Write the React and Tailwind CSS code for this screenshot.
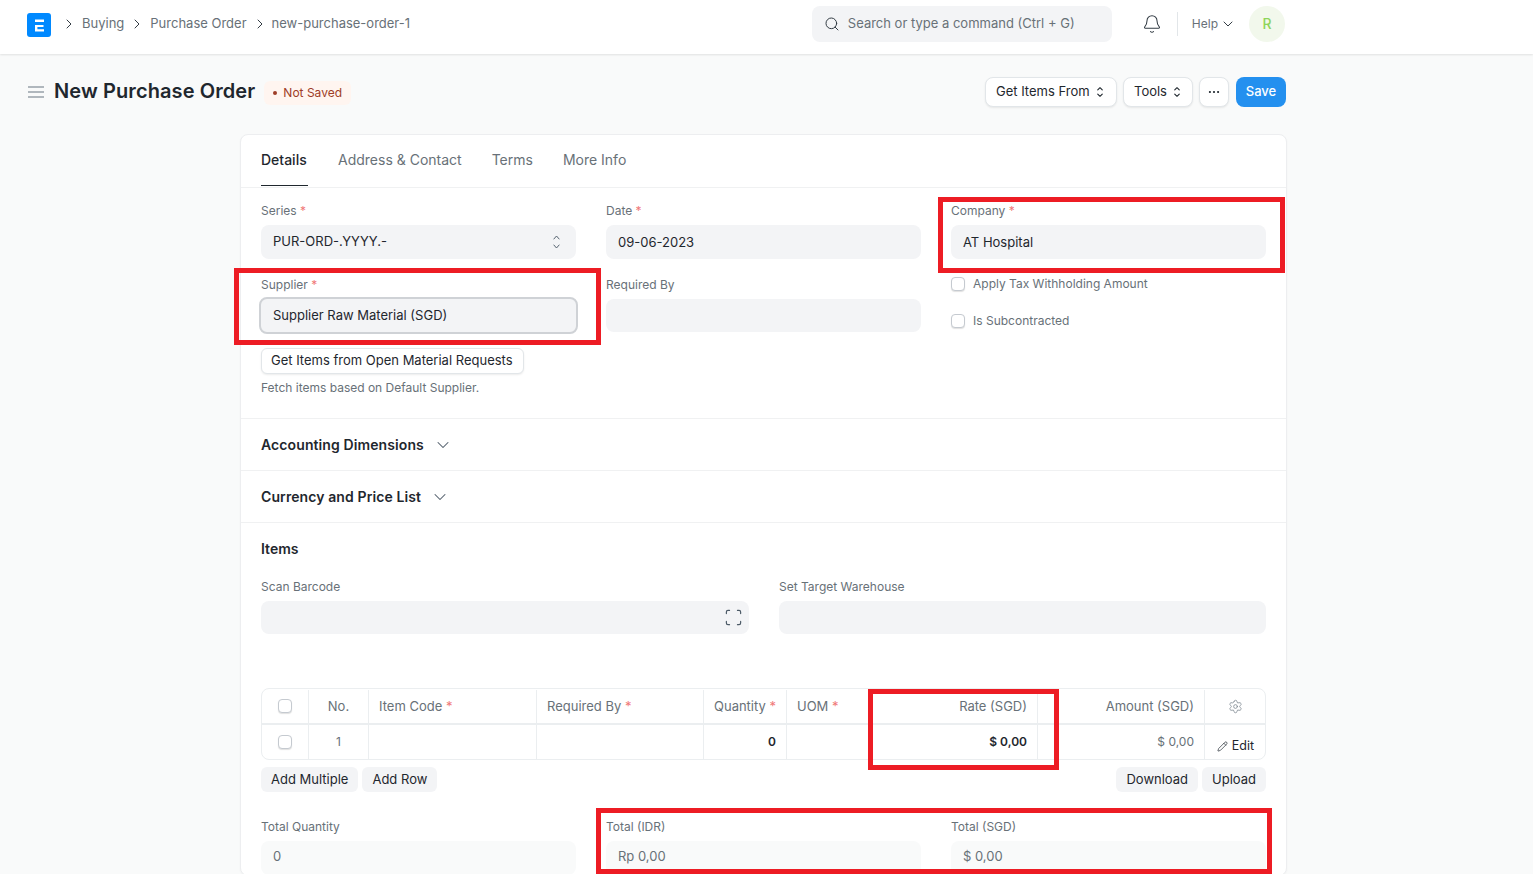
import React from 'react';
import { Bell, ChevronDown, ChevronRight, Ellipsis, Pencil, Scan, Search, Settings } from 'lucide-react';

const Star = () => <span className="text-[#f07878]"> *</span>;

const Label = ({ text, required }) => (
  <div className="h-4 mb-[6px] text-xs leading-4 text-[#687178]">
    {text}
    {required && <Star />}
  </div>
);

const Field = ({ label, required, value, light, low, children }) => (
  <div>
    <Label text={label} required={required} />
    <div className={`${value ? 'h-[34px]' : 'h-[33px]'} ${low ? 'pt-[1px]' : ''} ${light ? 'pb-[2px] bg-[#f9fafa] text-[#687178]' : 'bg-[#f3f4f6] text-[#1f272e]'} px-3 flex items-center justify-between rounded-lg text-[13px]`}>
      <span>{value}</span>
      {children}
    </div>
  </div>
);

const Check = () => (
  <span className="block w-[14px] h-[14px] rounded-[4px] border border-[#c5cad0] bg-white shadow-[0_1px_1px_rgba(0,0,0,0.12)]"></span>
);

// up and down carets used on select style controls
const Caret = ({ className, strokeWidth = 1 }) => (
  <svg viewBox="0 0 8 14" fill="none" stroke="currentColor" strokeWidth={strokeWidth} strokeLinecap="round" strokeLinejoin="round" preserveAspectRatio="none" className={className}>
    <path d="M1 4l3-3 3 3" />
    <path d="M1 10l3 3 3-3" />
  </svg>
);

const TopButton = ({ className, children }) => (
  <button className={`h-[30px] flex items-center rounded-lg bg-white text-[13px] text-[#1f272e] border border-[#e2e6e9] shadow-[0_1px_2px_rgba(0,0,0,0.08)] ${className}`}>
    {children}
  </button>
);

const GreyButton = ({ children }) => (
  <button className="h-[25px] px-[10px] rounded-md bg-[#f3f4f6] text-[13px] text-[#1f272e]">{children}</button>
);

const Collapse = ({ title }) => (
  <div className="h-[52px] px-5 flex items-center gap-[9px] border-t border-[#f0f1f2]">
    <span className="text-sm font-semibold tracking-[0.1px] text-[#1f272e]">{title}</span>
    <ChevronDown className="w-5 h-5 text-[#4c5a67]" strokeWidth={1.25} />
  </div>
);

const cols = 'grid grid-cols-[47px_60px_168px_167px_83px_84px_167px_167px_60px]';
const cell = 'border-r border-[#ebeef0] px-[10px] flex items-center';

const Head = ({ children, required, right }) => (
  <div className={`${cell} ${right ? 'justify-end' : ''}`}>
    <span>
      {children}
      {required && <Star />}
    </span>
  </div>
);

const Marker = ({ className }) => (
  <div className={`absolute border-[5px] border-[#ed1c24] ${className}`}></div>
);

export default function App() {
  return (
    <div className="relative h-screen overflow-hidden bg-[#f9fafa] font-['Inter',sans-serif]">
      <header className="h-[54px] bg-white pl-[27px] pr-[248px] pb-[6px] flex items-center shadow-[0_1px_2px_rgba(0,0,0,0.1)]">
        <svg width="24" height="24" viewBox="0 0 24 24" className="shrink-0 mt-[2px]">
          <rect width="24" height="24" rx="3" fill="#0089ff" />
          <path d="M8 6.5h9v2.4H8zM8 12h8.5v2H8zM8 12h2.4v6.5H8zM8 16.2h9v2.3H8z" fill="#fff" />
        </svg>
        <nav className="ml-[10px] flex items-center text-[13px] text-[#687178]">
          <ChevronRight className="w-4 h-4 mr-[5px] text-[#333c44]" strokeWidth={1.5} />
          <span>Buying</span>
          <ChevronRight className="w-4 h-4 mx-[5px] text-[#333c44]" strokeWidth={1.5} />
          <span>Purchase Order</span>
          <ChevronRight className="w-4 h-4 ml-[5px] mr-1 text-[#333c44]" strokeWidth={1.5} />
          <span>new-purchase-order-1</span>
        </nav>
        <div className="ml-auto w-[300px] h-9 px-3 flex items-center gap-2 rounded-lg bg-[#f3f4f6] text-[13px] text-[#687178]">
          <Search className="w-4 h-4 text-[#333c44]" strokeWidth={1.5} />
          <span>Search or type a command (Ctrl + G)</span>
        </div>
        <Bell className="ml-[30px] w-5 h-5 text-[#333c44]" strokeWidth={1.25} />
        <div className="ml-[15px] w-px h-6 bg-[#e2e6e9]"></div>
        <span className="ml-[14px] text-xs text-[#687178]">Help</span>
        <ChevronDown className="ml-[2px] w-4 h-4 text-[#333c44]" strokeWidth={1.5} />
        <div className="ml-[13px] w-9 h-9 rounded-full bg-[#f2f8ec] flex items-center justify-center text-sm font-medium text-[#8ed45a]">R</div>
      </header>

      <div className="pl-[27px] pr-[247px] pt-[23px] h-[53px] flex items-center">
        <svg width="16" height="12" viewBox="0 0 16 12" fill="none" stroke="#98a1a9" strokeWidth="1.5" className="ml-px">
          <path d="M0 1h16M0 6h16M0 11h16" />
        </svg>
        <h1 className="ml-[10px] mb-[2px] text-xl font-semibold tracking-[0.1px] text-[#1f272e]">New Purchase Order</h1>
        <span className="ml-[9px] mt-[2px] h-6 pl-[9px] pr-[9px] flex items-center gap-[6px] rounded-md bg-[#fff5f0] text-xs text-[#9e3d27]">
          <span className="w-1 h-1 rounded-full bg-[#9e3d27]"></span>
          Not Saved
        </span>
        <div className="ml-auto flex items-center gap-[6px]">
          <TopButton className="w-[132px] px-[10px] gap-[7px]">
            Get Items From
            <Caret className="w-[6px] h-[10px] text-[#1f272e]" strokeWidth={1.5} />
          </TopButton>
          <TopButton className="w-[70px] px-[10px] gap-[7px]">
            Tools
            <Caret className="w-[6px] h-[10px] text-[#1f272e]" strokeWidth={1.5} />
          </TopButton>
          <TopButton className="w-[30px] justify-center">
            <Ellipsis className="w-[14px] h-[14px] text-[#1f272e]" strokeWidth={1.75} />
          </TopButton>
          <button className="ml-[1px] h-[30px] w-[50px] rounded-lg bg-[#2490ef] text-[13px] font-medium text-white">Save</button>
        </div>
      </div>

      <main className="ml-[240px] mt-[27px] w-[1047px] bg-white border border-[#edeef0] rounded-lg shadow-[0_1px_2px_rgba(0,0,0,0.04)]">
        <div className="h-[53px] px-5 pb-[1px] flex gap-[30px] border-b border-[#f0f1f2] text-sm text-[#687178]">
          <div className="w-[47px] flex items-center font-medium text-[#1f272e] border-b border-[#1f272e]">Details</div>
          <div className="pb-px flex items-center">Address &amp; Contact</div>
          <div className="pb-px flex items-center">Terms</div>
          <div className="pb-px flex items-center">More Info</div>
        </div>

        <section className="h-[230px] px-5 pt-[15px] grid grid-cols-[315px_315px_315px] gap-x-[30px]">
          <div>
            <Field label="Series" required value="PUR-ORD-.YYYY.-">
              <Caret className="w-[7px] h-[14px] mr-1 text-[#4c5a67]" />
            </Field>
            <div className="mt-[18px]">
              <Label text="Supplier" required />
              <div className="-mx-[2px] -mt-[2px] h-[37px] px-3 flex items-center rounded-lg bg-[#f3f4f6] border-2 border-[#cfd2d6] text-[13px] text-[#1f272e]">
                Supplier Raw Material (SGD)
              </div>
            </div>
            <button className="block mt-[14px] w-[263px] h-[26px] px-[9px] text-left rounded-md bg-white border border-[#e2e6e9] text-[13px] text-[#1f272e] shadow-[0_1px_2px_rgba(0,0,0,0.08)]">
              Get Items from Open Material Requests
            </button>
            <p className="mt-[6px] text-xs leading-4 text-[#687178]">Fetch items based on Default Supplier.</p>
          </div>
          <div>
            <Field label="Date" required value="09-06-2023" low />
            <div className="mt-[18px]">
              <Field label="Required By" />
            </div>
          </div>
          <div>
            <Field label="Company" required value="AT Hospital" low />
            <div className="mt-[17px] flex items-center gap-2 text-xs leading-4 text-[#687178]">
              <Check />
              Apply Tax Withholding Amount
            </div>
            <div className="mt-[21px] flex items-center gap-2 text-xs leading-4 text-[#687178]">
              <Check />
              Is Subcontracted
            </div>
          </div>
        </section>

        <Collapse title="Accounting Dimensions" />
        <Collapse title="Currency and Price List" />

        <section className="px-5 pt-[18px] border-t border-[#f0f1f2]">
          <h2 className="h-4 text-sm leading-4 font-semibold text-[#1f272e]">Items</h2>
          <div className="mt-[22px] grid grid-cols-[488px_487px] gap-x-[30px]">
            <Field label="Scan Barcode">
              <Scan className="w-[19px] h-[19px] -mr-[6px] text-[#4c5a67]" strokeWidth={1.5} />
            </Field>
            <Field label="Set Target Warehouse" />
          </div>

          <div className="mt-[54px] w-[1005px] border border-[#ebeef0] rounded-lg text-[13px] text-[#687178]">
            <div className={`${cols} h-[36px] pt-[1px] border-b-2 border-[#ebeef0]`}>
              <div className={`${cell} justify-center pb-px`}><Check /></div>
              <div className={`${cell} justify-center`}>No.</div>
              <Head required>Item Code</Head>
              <Head required>Required By</Head>
              <Head required>Quantity</Head>
              <Head required>UOM</Head>
              <Head right>Rate (SGD)</Head>
              <Head right>Amount (SGD)</Head>
              <div className="flex items-center justify-center">
                <Settings className="w-[15px] h-[15px] text-[#7c868f]" strokeWidth={1.25} />
              </div>
            </div>
            <div className={`${cols} h-[34px] text-xs`}>
              <div className={`${cell} justify-center`}><Check /></div>
              <div className={`${cell} justify-center`}>1</div>
              <div className={cell}></div>
              <div className={cell}></div>
              <div className={`${cell} justify-end font-semibold text-[#1f272e]`}>0</div>
              <div className={cell}></div>
              <div className={`${cell} justify-end font-semibold text-[#1f272e]`}>$ 0,00</div>
              <div className={`${cell} justify-end`}>$ 0,00</div>
              <div className="flex items-center justify-center gap-1 pl-px pt-[8px] text-[12.5px] text-[#1f272e]">
                <Pencil className="w-[11px] h-[11px]" strokeWidth={1.5} />
                Edit
              </div>
            </div>
          </div>

          <div className="mt-[7px] flex gap-1">
            <GreyButton>Add Multiple</GreyButton>
            <GreyButton>Add Row</GreyButton>
            <div className="ml-auto flex gap-1">
              <GreyButton>Download</GreyButton>
              <GreyButton>Upload</GreyButton>
            </div>
          </div>

          <div className="mt-[27px] grid grid-cols-[315px_315px_315px] gap-x-[30px]">
            <Field label="Total Quantity" value="0" light />
            <Field label="Total (IDR)" value="Rp 0,00" light />
            <Field label="Total (SGD)" value="$ 0,00" light />
          </div>
        </section>
      </main>

      <Marker className="left-[938px] top-[197px] w-[347px] h-[76px]" />
      <Marker className="left-[234px] top-[268px] w-[367px] h-[77px]" />
      <Marker className="left-[868px] top-[689px] w-[191px] h-[81px]" />
      <Marker className="left-[596px] top-[808px] w-[676px] h-[66px]" />
    </div>
  );
}
